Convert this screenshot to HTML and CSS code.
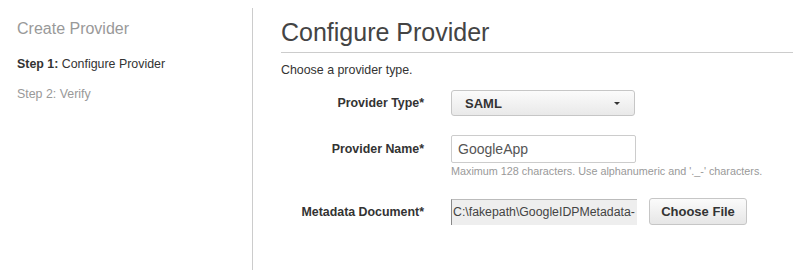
FILE: index.html
```html
<!DOCTYPE html>
<html>
<head>
<meta charset="utf-8">
<link rel="stylesheet" href="styles.css">
</head>
<body>
<div class="page">
  <aside class="sidebar">
    <div class="side-title">Create Provider</div>
    <div class="step active"><b>Step 1:</b> Configure Provider</div>
    <div class="step">Step 2: Verify</div>
  </aside>
  <main class="main">
    <h2 class="title">Configure Provider</h2>
    <p class="intro">Choose a provider type.</p>
    <div class="form">
      <div class="row row-type">
        <label class="label">Provider Type*</label>
        <div class="control">
          <div class="select"><span>SAML</span><span class="caret"></span></div>
        </div>
      </div>
      <div class="row row-name">
        <label class="label">Provider Name*</label>
        <div class="control">
          <div class="input">GoogleApp</div>
          <div class="hint">Maximum 128 characters. Use alphanumeric and '._-' characters.</div>
        </div>
      </div>
      <div class="row row-file">
        <label class="label">Metadata Document*</label>
        <div class="control file-control">
          <div class="file-path">C:\fakepath\GoogleIDPMetadata-</div>
          <div class="button">Choose File</div>
        </div>
      </div>
    </div>
  </main>
</div>
</body>
</html>
```
FILE: styles.css
```css
html, body {
  margin: 0;
  padding: 0;
  background: #fff;
  font-family: "Liberation Sans", Arial, sans-serif;
  color: #444;
}
.page {
  display: flex;
  height: 270px;
  padding-top: 8px;
  box-sizing: border-box;
}
.sidebar {
  width: 253px;
  border-right: 1px solid #ccc;
  box-sizing: border-box;
  padding: 11px 0 0 17px;
}
.side-title {
  font-size: 16px;
  color: #999;
  line-height: 20px;
  margin-bottom: 18px;
}
.step {
  font-size: 12.4px;
  line-height: 15px;
  color: #999;
  margin-bottom: 15px;
}
.step.active {
  color: #333;
}
.step b {
  font-weight: bold;
}
.main {
  flex: 1;
  padding-left: 28px;
}
.title {
  margin: 0;
  font-size: 25px;
  font-weight: normal;
  color: #444;
  line-height: 30px;
  padding-top: 9px;
  padding-bottom: 5px;
  border-bottom: 1px solid #ccc;
}
.intro {
  margin: 10px 0 0;
  font-size: 12.4px;
  line-height: 15px;
  color: #333;
}
.form {
  display: flex;
  flex-direction: column;
}
.row {
  display: grid;
  grid-template-columns: 143px auto;
  column-gap: 27px;
  align-items: start;
}
.label {
  text-align: right;
  font-weight: bold;
  font-size: 12.4px;
  color: #333;
  line-height: 15px;
}
.row-type { margin-top: 12px; }
.row-type .label { padding-top: 6px; }
.row-name { margin-top: 19px; }
.row-name .label { padding-top: 7px; }
.row-file { margin-top: 20px; }
.row-file .label { padding-top: 7px; }
.select {
  width: 184px;
  height: 26px;
  box-sizing: border-box;
  border: 1px solid #c6c6c6;
  border-radius: 3px;
  background: linear-gradient(#fbfbfb, #e9e9e9);
  display: flex;
  align-items: center;
  justify-content: space-between;
  padding: 0 14px 0 13px;
  font-weight: bold;
  font-size: 13px;
  color: #333;
}
.caret {
  width: 0;
  height: 0;
  border-left: 3px solid transparent;
  border-right: 3px solid transparent;
  border-top: 3px solid #333;
}
.input {
  width: 185px;
  height: 28px;
  box-sizing: border-box;
  border: 1px solid #ccc;
  border-radius: 2px;
  padding: 0 6px;
  display: flex;
  align-items: center;
  font-size: 14px;
  color: #555;
}
.hint {
  font-size: 10.8px;
  color: #999;
  line-height: 13px;
  margin-top: 2px;
  white-space: nowrap;
}
.file-control {
  display: flex;
  align-items: center;
  gap: 12px;
}
.file-path {
  width: 186px;
  height: 26px;
  box-sizing: border-box;
  background: #eee;
  border-left: 1px solid #888;
  border-top: 1px solid #bbb;
  font-size: 12.3px;
  color: #444;
  white-space: nowrap;
  overflow: hidden;
  display: flex;
  align-items: center;
  padding-left: 1px;
}
.button {
  width: 98px;
  height: 27px;
  box-sizing: border-box;
  border: 1px solid #c6c6c6;
  border-radius: 3px;
  background: linear-gradient(#fbfbfb, #e6e6e6);
  display: flex;
  align-items: center;
  justify-content: center;
  font-weight: bold;
  font-size: 13px;
  color: #333;
}
```
